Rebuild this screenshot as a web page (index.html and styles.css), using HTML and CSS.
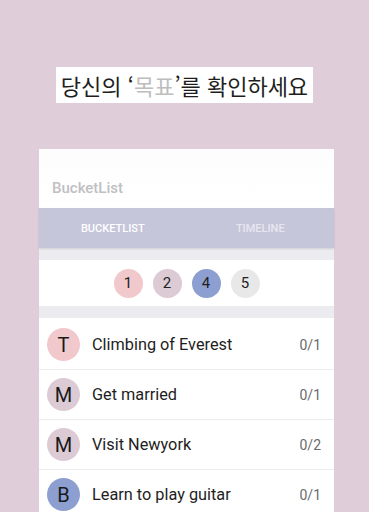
FILE: index.html
```html
<!DOCTYPE html>
<html lang="ko">
<head>
<meta charset="utf-8">
<link rel="stylesheet" href="styles.css">
</head>
<body>
<div class="page">
  <div class="headline">당신의 ‘<span class="muted">목표</span>’를 확인하세요</div>
  <div class="card">
    <div class="appbar">BucketList</div>
    <div class="tabs">
      <div class="tab active">BUCKETLIST</div>
      <div class="tab">TIMELINE</div>
    </div>
    <div class="band"></div>
    <div class="filters">
      <span class="dot c-pink">1</span>
      <span class="dot c-mauve">2</span>
      <span class="dot c-blue">4</span>
      <span class="dot c-grey">5</span>
    </div>
    <div class="band"></div>
    <ul class="list">
      <li class="row"><span class="avatar c-pink">T</span><span class="name">Climbing of Everest</span><span class="count">0/1</span></li>
      <li class="row"><span class="avatar c-mauve">M</span><span class="name">Get married</span><span class="count">0/1</span></li>
      <li class="row"><span class="avatar c-mauve">M</span><span class="name">Visit Newyork</span><span class="count">0/2</span></li>
      <li class="row"><span class="avatar c-blue">B</span><span class="name">Learn to play guitar</span><span class="count">0/1</span></li>
    </ul>
  </div>
</div>
</body>
</html>
```
FILE: styles.css
```css
html, body {
  margin: 0;
  padding: 0;
  background: #dfcdd9;
  overflow: hidden;
}
.page {
  width: 369px;
  height: 512px;
  display: flex;
  flex-direction: column;
  align-items: center;
  font-family: Roboto, "Noto Sans CJK KR", sans-serif;
}
.headline {
  margin-top: 67px;
  height: 36px;
  width: 257px;
  flex: none;
  background: #ffffff;
  display: flex;
  align-items: center;
  justify-content: center;
  font-family: "Noto Sans CJK KR", sans-serif;
  font-size: 22px;
  color: #1e1e1e;
  letter-spacing: 0;
}
.muted { color: #bdbdbd; }
.card {
  margin-top: 46px;
  margin-left: 4px;
  width: 295px;
  background: #ffffff;
  flex: 1;
  display: flex;
  flex-direction: column;
}
.appbar {
  height: 59px;
  flex: none;
  display: flex;
  align-items: flex-end;
  padding: 0 0 11px 13px;
  box-sizing: border-box;
  font-size: 15px;
  font-weight: 500;
  color: #c0c0c4;
  background: linear-gradient(#fdfdfd, #ffffff);
}
.tabs {
  height: 40px;
  flex: none;
  display: flex;
  background: #c6c6da;
  box-shadow: 0 1px 2px rgba(0,0,0,0.12);
  position: relative;
}
.tab {
  flex: 1;
  display: flex;
  align-items: center;
  justify-content: center;
  font-size: 11px;
  font-weight: 500;
  color: #e6e6ef;
}
.tab.active { color: #ffffff; }
.band {
  height: 12px;
  flex: none;
  background: #ececf0;
}
.filters {
  height: 46px;
  flex: none;
  display: flex;
  align-items: center;
  justify-content: center;
  gap: 10px;
}
.dot {
  width: 29px;
  height: 29px;
  border-radius: 50%;
  display: flex;
  align-items: center;
  justify-content: center;
  font-size: 15px;
  color: #222;
}
.c-pink { background: #f1c8cb; }
.c-mauve { background: #dccad5; }
.c-blue { background: #8d9fd0; }
.c-grey { background: #e8e8e8; }
.list {
  list-style: none;
  margin: 2px 0 0 0;
  padding: 0;
}
.row {
  height: 50px;
  display: flex;
  align-items: center;
  padding: 0 13px 0 8px;
  border-bottom: 1px solid #ececec;
  box-sizing: border-box;
}
.avatar {
  width: 33px;
  height: 33px;
  border-radius: 50%;
  display: flex;
  align-items: center;
  justify-content: center;
  font-size: 20px;
  color: #1a1a1a;
  flex: none;
}
.name {
  margin-left: 12px;
  flex: 1;
  font-size: 16.3px;
  color: #1e1e1e;
}
.count {
  font-size: 14px;
  color: #6a6a6a;
}
```
